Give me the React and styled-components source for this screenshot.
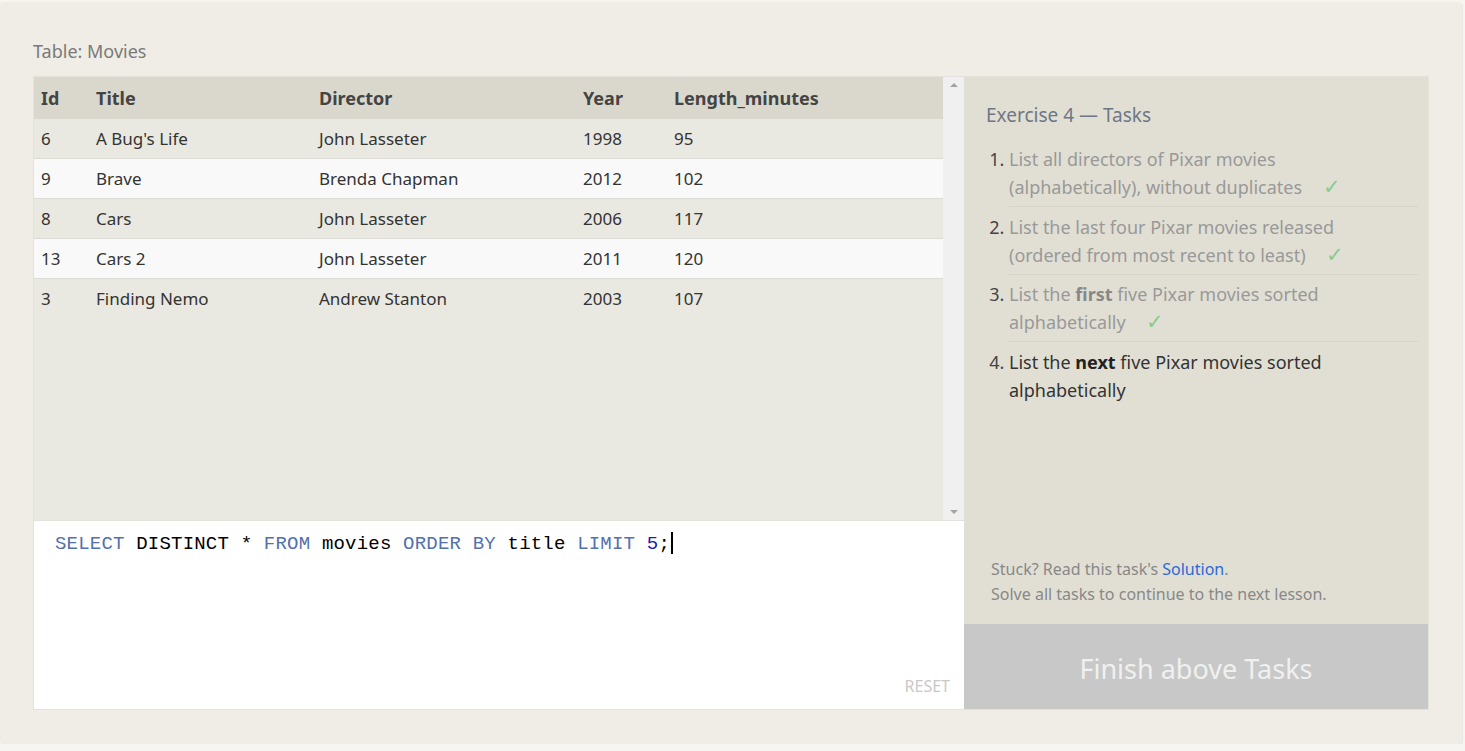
import React from "react";
import styled, { createGlobalStyle } from "styled-components";

const GlobalStyle = createGlobalStyle`
  html, body {
    margin: 0;
    padding: 0;
    background: #f6f5f1;
    font-family: "Noto Sans", "Open Sans", sans-serif;
  }
`;

const Card = styled.div`
  box-sizing: border-box;
  margin-top: 2px;
  width: 1462px;
  height: 742px;
  background: #efede6;
  border-radius: 4px;
  box-shadow: 1px 1px 1px rgba(0, 0, 0, 0.06);
  padding: 38px 33px 32px 33px;
  display: flex;
  flex-direction: column;
`;

const TableLabel = styled.div`
  font-size: 18px;
  color: #7a7a78;
  height: 36px;
  line-height: 22px;
`;

const Frame = styled.div`
  display: flex;
  height: 634px;
  border: 1px solid #e4e2da;
  box-sizing: border-box;
`;

const LeftPane = styled.div`
  width: 930px;
  display: flex;
  flex-direction: column;
`;

const TableArea = styled.div`
  height: 443px;
  display: flex;
  background: #e9e8e1;
`;

const TableScroll = styled.div`
  flex: 1;
`;

const Table = styled.table`
  width: 100%;
  border-collapse: collapse;
  color: #333;
`;

const HeadCell = styled.th`
  text-align: left;
  font-weight: 700;
  font-size: 18px;
  color: #444;
  background: #dad8cd;
  height: 42px;
  padding: 0 9px 0 7px;
  width: ${(p) => p.w || "auto"};
`;

const Row = styled.tr`
  background: ${(p) => (p.alt ? "#f9f9f9" : "#e9e8e1")};
  border-bottom: ${(p) => (p.last ? "none" : "1px solid #dcdbd5")};
`;

const Cell = styled.td`
  font-size: 17px;
  height: 39px;
  padding: 0 9px 0 7px;
`;

const ScrollBar = styled.div`
  width: 21px;
  background: #f0f0f0;
  display: flex;
  flex-direction: column;
  justify-content: space-between;
  align-items: center;
  padding: 6px 0;
  box-sizing: border-box;
`;

const Arrow = styled.div`
  width: 0;
  height: 0;
  border-left: 4px solid transparent;
  border-right: 4px solid transparent;
  ${(p) =>
    p.down
      ? "border-top: 4px solid #a3a3a3;"
      : "border-bottom: 4px solid #a3a3a3;"}
`;

const Editor = styled.div`
  flex: 1;
  background: #fff;
  border-top: 1px solid #e4e2da;
  padding: 11px 21px;
  position: relative;
`;

const Code = styled.div`
  font-family: "Liberation Mono", "DejaVu Sans Mono", monospace;
  font-size: 19px;
  letter-spacing: 0.2px;
  line-height: 24px;
  color: #000;
  white-space: pre;
`;

const Kw = styled.span`
  color: #5470ad;
`;

const Num = styled.span`
  color: #1a1ab8;
`;

const Caret = styled.span`
  display: inline-block;
  width: 2px;
  height: 22px;
  background: #000;
  margin-left: 1px;
  vertical-align: -5px;
`;

const ResetButton = styled.div`
  position: absolute;
  right: 14px;
  bottom: 12px;
  font-size: 16px;
  color: #c8c8c8;
`;

const RightPane = styled.div`
  flex: 1;
  background: #e1dfd4;
  display: flex;
  flex-direction: column;
`;

const TasksBox = styled.div`
  flex: 1;
  padding: 25px 10px 0 22px;
`;

const TasksTitle = styled.div`
  font-size: 19px;
  color: #6e7784;
  margin-bottom: 17px;
`;

const TaskList = styled.ol`
  margin: 0;
  padding: 0 0 0 23px;
  font-size: 18px;
  line-height: 28px;
`;

const TaskItem = styled.li`
  color: ${(p) => (p.done ? "#999" : "#333")};
  padding: 0 0 ${(p) => (p.last ? "0" : "5px")} 0;
  margin-bottom: 5.5px;
  border-bottom: ${(p) => (p.last ? "none" : "1px solid #d6d4c9")};
  &::marker {
    color: #444;
  }
  b {
    color: ${(p) => (p.done ? "#888" : "#222")};
  }
`;

const TaskText = styled.div`
  max-width: 350px;
`;

const Check = styled.span`
  display: inline-block;
  color: #86cc8c;
  font-size: 21px;
  line-height: 20px;
  margin-left: 16px;
`;

const Help = styled.div`
  padding: 0 10px 17px 27px;
  font-size: 16px;
  line-height: 25px;
  color: #888;
  a {
    color: #2a6ad8;
    text-decoration: none;
  }
`;

const FinishButton = styled.div`
  height: 85px;
  background: #c8c8c8;
  color: #f0f0f0;
  font-size: 27px;
  display: flex;
  align-items: center;
  justify-content: center;
  padding-top: 4px;
  box-sizing: border-box;
`;

const movies = [
  { id: 6, title: "A Bug's Life", director: "John Lasseter", year: 1998, len: 95 },
  { id: 9, title: "Brave", director: "Brenda Chapman", year: 2012, len: 102 },
  { id: 8, title: "Cars", director: "John Lasseter", year: 2006, len: 117 },
  { id: 13, title: "Cars 2", director: "John Lasseter", year: 2011, len: 120 },
  { id: 3, title: "Finding Nemo", director: "Andrew Stanton", year: 2003, len: 107 },
];

export default function App() {
  return (
    <>
      <GlobalStyle />
      <Card>
        <TableLabel>Table: Movies</TableLabel>
        <Frame>
          <LeftPane>
            <TableArea>
              <TableScroll>
                <Table>
                  <thead>
                    <tr>
                      <HeadCell w="39px">Id</HeadCell>
                      <HeadCell w="207px">Title</HeadCell>
                      <HeadCell w="248px">Director</HeadCell>
                      <HeadCell w="75px">Year</HeadCell>
                      <HeadCell>Length_minutes</HeadCell>
                    </tr>
                  </thead>
                  <tbody>
                    {movies.map((m, i) => (
                      <Row
                        key={m.id}
                        alt={i % 2 === 1}
                        last={i === movies.length - 1}
                      >
                        <Cell>{m.id}</Cell>
                        <Cell>{m.title}</Cell>
                        <Cell>{m.director}</Cell>
                        <Cell>{m.year}</Cell>
                        <Cell>{m.len}</Cell>
                      </Row>
                    ))}
                  </tbody>
                </Table>
              </TableScroll>
              <ScrollBar>
                <Arrow />
                <Arrow down />
              </ScrollBar>
            </TableArea>
            <Editor>
              <Code>
                <Kw>SELECT</Kw>
                {" DISTINCT * "}
                <Kw>FROM</Kw>
                {" movies "}
                <Kw>ORDER BY</Kw>
                {" title "}
                <Kw>LIMIT</Kw>
                {" "}
                <Num>5</Num>
                {";"}
                <Caret />
              </Code>
              <ResetButton>RESET</ResetButton>
            </Editor>
          </LeftPane>
          <RightPane>
            <TasksBox>
              <TasksTitle>Exercise 4 — Tasks</TasksTitle>
              <TaskList>
                <TaskItem done>
                  <TaskText>
                    List all directors of Pixar movies (alphabetically), without
                    duplicates <Check>✓</Check>
                  </TaskText>
                </TaskItem>
                <TaskItem done>
                  <TaskText>
                    List the last four Pixar movies released (ordered from most
                    recent to least) <Check>✓</Check>
                  </TaskText>
                </TaskItem>
                <TaskItem done>
                  <TaskText>
                    List the <b>first</b> five Pixar movies sorted
                    alphabetically <Check>✓</Check>
                  </TaskText>
                </TaskItem>
                <TaskItem last>
                  <TaskText>
                    List the <b>next</b> five Pixar movies sorted alphabetically
                  </TaskText>
                </TaskItem>
              </TaskList>
            </TasksBox>
            <Help>
              Stuck? Read this task's <a href="#">Solution</a>.
              <br />
              Solve all tasks to continue to the next lesson.
            </Help>
            <FinishButton>Finish above Tasks</FinishButton>
          </RightPane>
        </Frame>
      </Card>
    </>
  );
}
